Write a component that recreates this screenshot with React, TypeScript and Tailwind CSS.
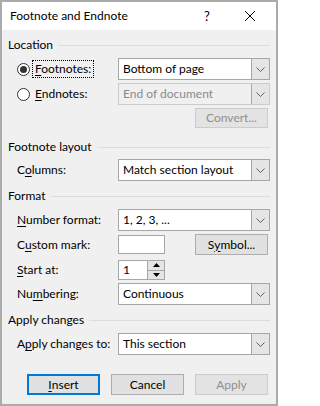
import React from "react";

const Chevron = () => (
  <svg width="9" height="5" viewBox="0 0 9 5" className="block">
    <path d="M0.5 0.5 L4.5 4.5 L8.5 0.5" fill="none" stroke="#606060" strokeWidth="1" />
  </svg>
);

function Dropdown({ value, disabled }: { value: string; disabled?: boolean }) {
  return (
    <div
      className={`flex h-full flex-1 border ${
        disabled ? "border-[#cccccc] bg-[#f0f0f0] text-[#8a8a8a]" : "border-[#a6a6a6] bg-white text-black"
      }`}
    >
      <div className="flex flex-1 items-center pl-[4px]">{value}</div>
      <div className="flex w-[18px] items-center justify-center border-l border-[#a6a6a6] bg-[#e5e5e5]">
        <Chevron />
      </div>
    </div>
  );
}

function Btn({
  children,
  kind = "normal",
  h = "h-[21px]",
}: {
  children: React.ReactNode;
  kind?: "normal" | "default" | "disabled";
  h?: string;
}) {
  const look =
    kind === "default"
      ? "border-2 border-[#0078d7] bg-[#e1e1e1] text-black"
      : kind === "disabled"
      ? "border border-[#cccccc] bg-[#e3e3e3] text-[#8f8f8f]"
      : "border border-[#adadad] bg-[#e1e1e1] text-black";
  return <div className={`flex w-[73px] ${h} items-center justify-center ${look}`}>{children}</div>;
}

function Heading({ text, mt }: { text: string; mt: string }) {
  return (
    <div className={`${mt} flex h-4 items-center`}>
      <span>{text}</span>
      <div className="ml-[5px] h-px flex-1 bg-[#dcdcdc]" />
    </div>
  );
}

function Row({ label, mt, h, children }: { label: React.ReactNode; mt: string; h: string; children: React.ReactNode }) {
  return (
    <div className={`${mt} flex ${h} items-center`}>
      <div className="w-[110px] shrink-0 pl-[9px]">{label}</div>
      {children}
    </div>
  );
}

const U = ({ children }: { children: React.ReactNode }) => (
  <span className="underline decoration-1 underline-offset-[2px]">{children}</span>
);

function Radio({ checked }: { checked?: boolean }) {
  return (
    <div className="flex h-[13px] w-[13px] shrink-0 items-center justify-center rounded-full border border-[#333333] bg-white">
      {checked && <div className="h-[7px] w-[7px] rounded-full bg-[#333333]" />}
    </div>
  );
}

export default function App() {
  return (
    <div className="flex h-[406px] w-[278px] flex-col border-2 border-[#ababab] font-['Segoe_UI','Lato',sans-serif] text-[12px] leading-4 text-black">
      {/* title bar */}
      <div className="flex h-[28px] shrink-0 items-center bg-white">
        <div className="flex-1 pl-[8px] text-[12px]">Footnote and Endnote</div>
        <div className="mr-[4px] flex w-[34px] justify-center text-[13px]">?</div>
        <div className="flex w-[44px] justify-center">
          <svg width="10" height="10" viewBox="0 0 10 10">
            <path d="M0 0 L10 10 M10 0 L0 10" stroke="#000" strokeWidth="1" />
          </svg>
        </div>
        <div className="w-[4px]" />
      </div>

      {/* body */}
      <div className="flex flex-1 flex-col bg-[#f0f0f0] px-[6px]">
        <Heading text="Location" mt="mt-[7px]" />

        <div className="mt-[5px] flex h-[22px] items-center">
          <div className="flex w-[110px] shrink-0 items-center pl-[9px]">
            <Radio checked />
            <div className="ml-[2px] border border-dotted border-black px-[2px] py-0">
              <U>F</U>ootnotes:
            </div>
          </div>
          <Dropdown value="Bottom of page" />
        </div>

        <div className="mt-[3px] flex h-[22px] items-center">
          <div className="flex w-[110px] shrink-0 items-center pl-[9px]">
            <Radio />
            <div className="ml-[5px]">
              <U>E</U>ndnotes:
            </div>
          </div>
          <Dropdown value="End of document" disabled />
        </div>

        <div className="mt-[3px] flex justify-end pr-[2px]">
          <Btn kind="disabled" h="h-[20px]">
            Convert...
          </Btn>
        </div>

        <Heading text="Footnote layout" mt="mt-[11px]" />

        <Row
          mt="mt-[4px]"
          h="h-[22px]"
          label={
            <>
              C<U>o</U>lumns:
            </>
          }
        >
          <Dropdown value="Match section layout" />
        </Row>

        <Heading text="Format" mt="mt-[7px]" />

        <Row
          mt="mt-[5px]"
          h="h-[22px]"
          label={
            <>
              <U>N</U>umber format:
            </>
          }
        >
          <Dropdown value="1, 2, 3, ..." />
        </Row>

        <Row
          mt="mt-[3px]"
          h="h-[21px]"
          label={
            <>
              C<U>u</U>stom mark:
            </>
          }
        >
          <div className="h-[19px] w-[47px] border border-[#a6a6a6] bg-white" />
          <div className="flex flex-1 justify-end pr-[2px]">
            <Btn>
              S<U>y</U>mbol...
            </Btn>
          </div>
        </Row>

        <Row
          mt="mt-[5px]"
          h="h-[20px]"
          label={
            <>
              <U>S</U>tart at:
            </>
          }
        >
          <div className="flex h-[20px] w-[47px] border border-[#a6a6a6] bg-white">
            <div className="flex flex-1 items-center pl-[4px]">1</div>
            <div className="flex w-[17px] flex-col border-l border-[#a6a6a6]">
              <div className="flex flex-1 items-center justify-center border-b border-[#a6a6a6] bg-[#e5e5e5]">
                <svg width="7" height="4" viewBox="0 0 7 4">
                  <path d="M3.5 0 L7 4 L0 4 Z" fill="#000" />
                </svg>
              </div>
              <div className="flex flex-1 items-center justify-center bg-[#e5e5e5]">
                <svg width="7" height="4" viewBox="0 0 7 4">
                  <path d="M0 0 L7 0 L3.5 4 Z" fill="#000" />
                </svg>
              </div>
            </div>
          </div>
        </Row>

        <Row
          mt="mt-[3px]"
          h="h-[22px]"
          label={
            <>
              Nu<U>m</U>bering:
            </>
          }
        >
          <Dropdown value="Continuous" />
        </Row>

        <Heading text="Apply changes" mt="mt-[7px]" />

        <Row
          mt="mt-[5px]"
          h="h-[22px]"
          label={
            <>
              A<U>p</U>ply changes to:
            </>
          }
        >
          <Dropdown value="This section" />
        </Row>

        <div className="mt-[19px] flex gap-[11px] pl-[19px]">
          <Btn kind="default">
            <U>I</U>nsert
          </Btn>
          <Btn>Cancel</Btn>
          <Btn kind="disabled">Apply</Btn>
        </div>
      </div>
    </div>
  );
}
